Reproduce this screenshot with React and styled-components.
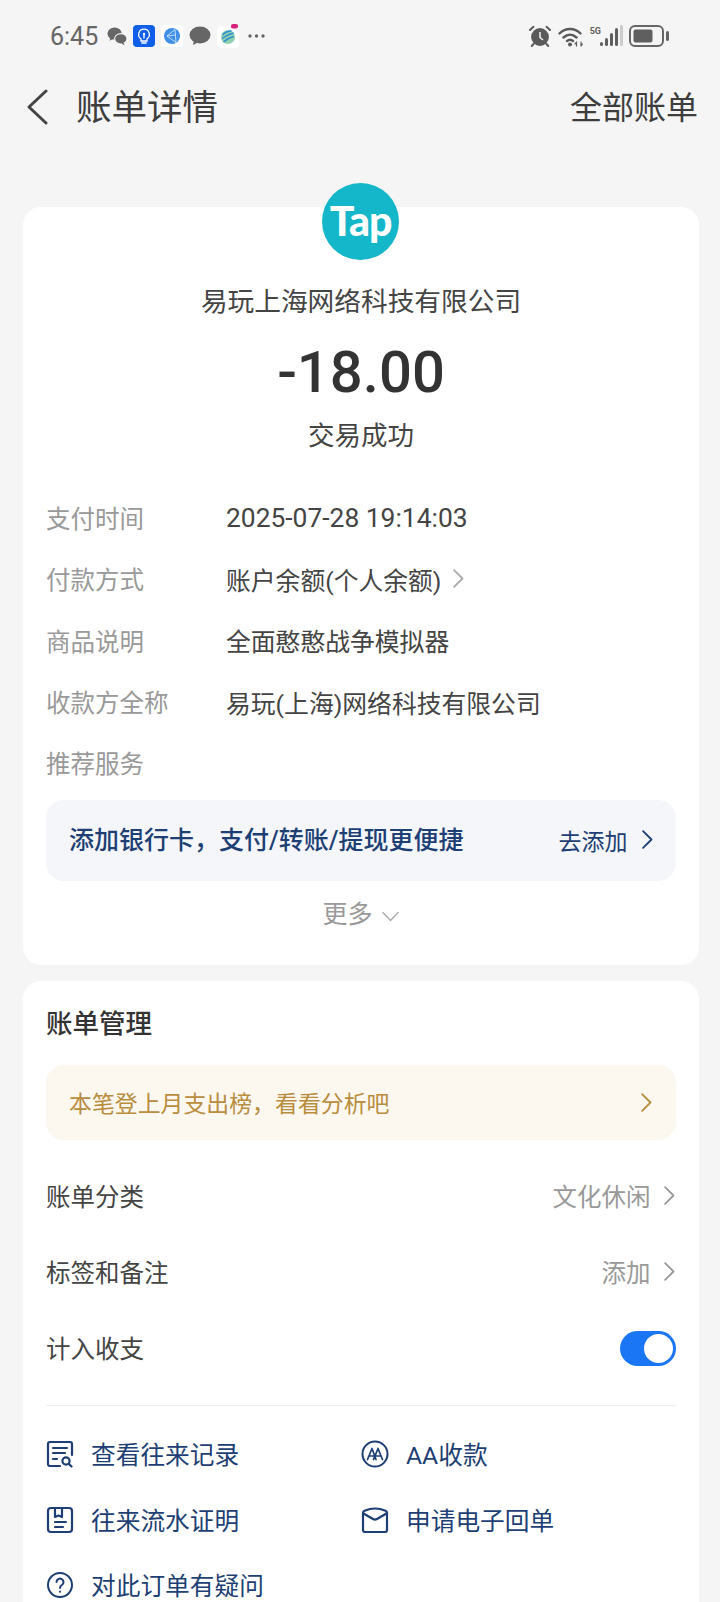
import React from "react";
import styled, { createGlobalStyle } from "styled-components";

const GlobalStyle = createGlobalStyle`
  html, body { margin: 0; padding: 0; background: #f5f5f5; }
  body { font-family: Roboto, "Noto Sans CJK SC", sans-serif; }
  * { box-sizing: border-box; }
`;

const Chevron = ({ color = "#999", size = 21, className }) => (
  <svg className={className} width={size * 0.6} height={size} viewBox="0 0 12 20" fill="none">
    <path d="M2 2l8 8-8 8" stroke={color} strokeWidth="1.7" strokeLinecap="round" strokeLinejoin="round" />
  </svg>
);

const RecordIcon = () => (
  <svg width="28" height="28" viewBox="0 0 28 28" fill="none" stroke="#1d3f73" strokeWidth="2.2" strokeLinecap="round" strokeLinejoin="round">
    <path d="M14 26H4a2 2 0 0 1-2-2V4a2 2 0 0 1 2-2h20a2 2 0 0 1 2 2v11" />
    <path d="M7 8h14M7 13h12M7 19h4" />
    <circle cx="20" cy="21" r="3.6" />
    <path d="M23 24l2.5 2.500" />
  </svg>
);

const ProofIcon = () => (
  <svg width="28" height="28" viewBox="0 0 28 28" fill="none" stroke="#1d3f73" strokeWidth="2.2" strokeLinecap="round" strokeLinejoin="round">
    <rect x="2" y="2" width="24" height="24" rx="3" />
    <path d="M9 2v9l3.500-1.500L16 11V2M9 16h11M9 21h8" />
  </svg>
);

const QuestionIcon = () => (
  <svg width="28" height="28" viewBox="0 0 28 28" fill="none" stroke="#1d3f73" strokeWidth="2" strokeLinecap="round" strokeLinejoin="round">
    <circle cx="14" cy="14" r="12" />
    <path d="M10.500 11a3.500 3.500 0 1 1 5.400 3c-1.200.8-1.900 1.500-1.900 3" />
    <path d="M14 20.500v.2" />
  </svg>
);

const SplitIcon = () => (
  <svg width="28" height="28" viewBox="0 0 28 28" fill="none" stroke="#1d3f73" strokeWidth="2" strokeLinecap="round" strokeLinejoin="round">
    <circle cx="14" cy="14" r="12.500" />
    <path d="M6.500 19.500L11 8.500l4 11M12.500 19.500L17 8.500l4.500 11M9 16h4M15 16h4" strokeWidth="1.700" />
  </svg>
);

const MailIcon = () => (
  <svg width="28" height="26" viewBox="0 0 28 26" fill="none" stroke="#1d3f73" strokeWidth="2.2" strokeLinecap="round" strokeLinejoin="round">
    <path d="M2 6c0-1 .6-1.800 1.500-2.200C7 2.300 10.500 1.500 14 1.500s7 .8 10.500 2.300c.9.4 1.500 1.200 1.500 2.200v17a2 2 0 0 1-2 2H4a2 2 0 0 1-2-2z" />
    <path d="M2.500 6.500L12 12a4 4 0 0 0 4 0l9.500-5.500" />
  </svg>
);

const ChatBubbles = () => (
  <svg width="20" height="20" viewBox="0 0 21 20" fill="#666">
    <ellipse cx="8" cy="7.500" rx="7.500" ry="6.500" />
    <path d="M3.500 11.500l-.8 3.500 4-2.200z" />
    <ellipse cx="14.500" cy="13" rx="6.500" ry="5.500" stroke="#f5f5f5" strokeWidth="1.200" />
    <path d="M17.500 17l1 2.800-3.500-1.800z" />
  </svg>
);

const BulbBadge = () => (
  <svg width="22" height="22" viewBox="0 0 22 22">
    <rect width="22" height="22" rx="4" fill="#0f5fe8" />
    <path d="M11 4.200a5.300 5.300 0 0 0-3 9.700v2.100h6v-2.100a5.300 5.300 0 0 0-3-9.700z" fill="none" stroke="#fff" strokeWidth="1.300" />
    <path d="M11 9v4M8.800 18h4.400" stroke="#fff" strokeWidth="1.300" strokeLinecap="round" />
    <circle cx="11" cy="9" r="1.200" fill="#fff" />
  </svg>
);

const NetworkBadge = () => (
  <svg width="22" height="22" viewBox="0 0 22 22">
    <rect width="22" height="22" rx="4" fill="#fff" />
    <circle cx="11" cy="11" r="8" fill="#3f8fe8" />
    <path d="M14 4.500L6 11l9 6.500zM6 11l8-1" fill="none" stroke="#cfe4fa" strokeWidth="0.900" />
  </svg>
);

const Bubble = () => (
  <svg width="22" height="20" viewBox="0 0 22 20" fill="#666">
    <ellipse cx="11" cy="9" rx="10.500" ry="8.500" />
    <path d="M5 14l-1 5 6-3z" />
  </svg>
);

const MobileBadge = () => (
  <svg width="22" height="24" viewBox="0 0 22 24" fill="none">
    <rect y="2" width="22" height="22" rx="4" fill="#fff" />
    <circle cx="11" cy="13" r="7" fill="#8fd0b0" />
    <path d="M5.500 11c3-3 6-4 9-4M5 14.500c4-3 7-4.500 11.500-5.500M6.500 18c3-3 6-4.500 10-5.500" stroke="#2f8fd0" strokeWidth="1.500" />
    <rect x="14" y="0" width="7" height="4.500" rx="2" fill="#d81e7a" />
  </svg>
);

const Dots = () => (
  <svg width="17" height="4" viewBox="0 0 17 4" fill="#666">
    <circle cx="2" cy="2" r="1.700" />
    <circle cx="8.500" cy="2" r="1.700" />
    <circle cx="15" cy="2" r="1.700" />
  </svg>
);

const AlarmIcon = () => (
  <svg width="24" height="22" viewBox="0 0 23 22" fill="none">
    <circle cx="11.500" cy="12" r="8.900" fill="#5a5a5a" />
    <path d="M11.500 7v5.500l3 2.500" stroke="#f5f5f5" strokeWidth="1.500" />
    <path d="M1.500 5L5 1.800M21.500 5L18 1.800M5 19l-1.700 2M18 19l1.700 2" stroke="#5a5a5a" strokeWidth="2" strokeLinecap="round" />
  </svg>
);

const WifiIcon = () => (
  <svg width="26" height="21" viewBox="0 0 26 21" fill="none" stroke="#5a5a5a" strokeWidth="2.400" strokeLinecap="round">
    <path d="M1.500 7.500c6-6 15-6 21 0M5.500 11.500c4-3.700 9-3.700 13 0M9 15c2-1.700 4-1.700 6 0" />
    <circle cx="12" cy="18.500" r="2" fill="#5a5a5a" stroke="none" />
    <path d="M18.500 16v4M18.500 16l-1.500 2M23 16v4M23 20l1.500-2" strokeWidth="1.200" />
  </svg>
);

const SignalIcon = () => (
  <svg width="23" height="22" viewBox="0 0 23 22">
    <rect x="0" y="17" width="3" height="4" rx="1.500" fill="#5f5f5f" />
    <rect x="5" y="13" width="3" height="8" rx="1.500" fill="#5f5f5f" />
    <rect x="10" y="8" width="3" height="13" rx="1.500" fill="#5f5f5f" />
    <rect x="15" y="3" width="3" height="18" rx="1.500" fill="#5f5f5f" />
    <rect x="20" y="0" width="3" height="21" rx="1.500" fill="#ccc" />
  </svg>
);

const BatteryIcon = () => (
  <svg width="41" height="22" viewBox="0 0 41 22" fill="none">
    <rect x="1" y="1" width="33" height="20" rx="5" stroke="#666" strokeWidth="2" />
    <rect x="4.500" y="4.500" width="19" height="13" rx="2" fill="#5f5f5f" />
    <rect x="37" y="6" width="3" height="10" rx="1.500" fill="#666" />
  </svg>
);

const BackIcon = () => (
  <svg width="22" height="36" viewBox="0 0 22 36" fill="none">
    <path d="M20 2L3 18l17 16" stroke="#444" strokeWidth="3" strokeLinecap="round" strokeLinejoin="round" />
  </svg>
);

const details = [
  { label: "支付时间", value: "2025-07-28 19:14:03", numeric: true },
  { label: "付款方式", value: "账户余额(个人余额)", link: true },
  { label: "商品说明", value: "全面憨憨战争模拟器" },
  { label: "收款方全称", value: "易玩(上海)网络科技有限公司" },
  { label: "推荐服务" },
];

const manageRows = [
  { label: "账单分类", value: "文化休闲" },
  { label: "标签和备注", value: "添加" },
];

const actions = [
  { icon: <RecordIcon />, text: "查看往来记录" },
  { icon: <SplitIcon />, text: "AA收款" },
  { icon: <ProofIcon />, text: "往来流水证明" },
  { icon: <MailIcon />, text: "申请电子回单" },
  { icon: <QuestionIcon />, text: "对此订单有疑问" },
];

const App = () => (
  <Page>
    <GlobalStyle />
    <StatusBar>
      <StatusLeft>
        <Clock>6:45</Clock>
        <ChatBubbles />
        <BulbBadge />
        <NetworkBadge />
        <Bubble />
        <MobileBadge />
        <DotsWrap><Dots /></DotsWrap>
      </StatusLeft>
      <StatusRight>
        <AlarmIcon />
        <WifiIcon />
        <SignalWrap>
          <FiveG>5G</FiveG>
          <SignalIcon />
        </SignalWrap>
        <BatteryIcon />
      </StatusRight>
    </StatusBar>

    <Nav>
      <NavLeft>
        <BackIcon />
        <NavTitle>账单详情</NavTitle>
      </NavLeft>
      <NavAction>全部账单</NavAction>
    </Nav>

    <Content>
      <SummaryCard>
        <Logo>Tap</Logo>
        <Merchant>易玩上海网络科技有限公司</Merchant>
        <Amount>-18.00</Amount>
        <Status>交易成功</Status>
        <DetailList>
          {details.map((item) => (
            <DetailRow key={item.label}>
              <DetailLabel>{item.label}</DetailLabel>
              <DetailValue $numeric={item.numeric}>
                {item.value}
                {item.link && <Chevron color="#aaa" />}
              </DetailValue>
            </DetailRow>
          ))}
        </DetailList>
        <PromoBanner>
          <PromoText>添加银行卡，支付/转账/提现更便捷</PromoText>
          <PromoAction>
            去添加
            <Chevron color="#1d3f73" />
          </PromoAction>
        </PromoBanner>
        <More>
          更多
          <MoreArrow width="19" height="11" viewBox="0 0 18 11" fill="none">
            <path d="M1.500 1.500L9 9.500l7.500-8" stroke="#aaa" strokeWidth="1.400" strokeLinecap="round" strokeLinejoin="round" />
          </MoreArrow>
        </More>
      </SummaryCard>

      <ManageCard>
        <CardTitle>账单管理</CardTitle>
        <TipBanner>
          <TipText>本笔登上月支出榜，看看分析吧</TipText>
          <Chevron color="#b98c3e" />
        </TipBanner>
        <ManageList>
          {manageRows.map((row) => (
            <ManageRow key={row.label}>
              {row.label}
              <ManageValue>
                {row.value}
                <Chevron color="#999" />
              </ManageValue>
            </ManageRow>
          ))}
          <ManageRow>
            计入收支
            <Toggle>
              <Knob />
            </Toggle>
          </ManageRow>
        </ManageList>
        <Divider />
        <ActionGrid>
          {actions.map((action) => (
            <ActionItem key={action.text}>
              <ActionIcon>{action.icon}</ActionIcon>
              {action.text}
            </ActionItem>
          ))}
        </ActionGrid>
      </ManageCard>
    </Content>
  </Page>
);

export default App;

const Page = styled.div`
  width: 720px;
  height: 1602px;
  overflow: hidden;
  background: #f5f5f5;
  color: #333;
`;

const StatusBar = styled.div`
  height: 72px;
  display: flex;
  align-items: center;
  justify-content: space-between;
  padding: 0 50px;
`;

const StatusLeft = styled.div`
  display: flex;
  align-items: center;
  gap: 6px;
`;

const Clock = styled.span`
  font-size: 25px;
  color: #666;
  margin-right: 3px;
`;

const DotsWrap = styled.span`
  display: flex;
  margin-left: 3px;
`;

const StatusRight = styled.div`
  display: flex;
  align-items: center;
  gap: 6px;
`;

const SignalWrap = styled.span`
  display: flex;
  align-items: flex-end;
`;

const FiveG = styled.span`
  font-size: 9px;
  font-weight: 700;
  color: #5f5f5f;
  align-self: flex-start;
  line-height: 12px;
  margin-right: -1px;
`;

const Nav = styled.div`
  height: 70px;
  display: flex;
  align-items: center;
  justify-content: space-between;
  padding: 0 22px 0 26px;
`;

const NavLeft = styled.div`
  display: flex;
  align-items: center;
  gap: 28px;
`;

const NavTitle = styled.div`
  font-size: 35.500px;
  color: #3d3d3d;
  padding-bottom: 5px;
`;

const NavAction = styled.div`
  font-size: 32px;
  color: #3d3d3d;
  padding-bottom: 4px;
`;

const Content = styled.div`
  padding: 65px 21px 0 23px;
  display: flex;
  flex-direction: column;
  gap: 16px;
`;

const Card = styled.div`
  position: relative;
  background: #fff;
  border-radius: 18px;
  padding-left: 23px;
  padding-right: 23px;
`;

const SummaryCard = styled(Card)`
  padding-top: 77px;
  padding-bottom: 35px;
`;

const ManageCard = styled(Card)`
  padding-top: 25px;
  padding-bottom: 20px;
`;

const Logo = styled.div`
  position: absolute;
  top: -24px;
  left: 299px;
  width: 77px;
  height: 77px;
  border-radius: 50%;
  background: #14b6c9;
  color: #fff;
  font-family: Lato, sans-serif;
  font-weight: 900;
  font-size: 41px;
  letter-spacing: -1px;
  padding-bottom: 2px;
  display: flex;
  align-items: center;
  justify-content: center;
`;

const Merchant = styled.div`
  font-size: 26.700px;
  line-height: 36px;
  text-align: center;
  color: #444;
`;

const Amount = styled.div`
  margin-top: 17px;
  font-size: 58px;
  line-height: 70px;
  font-weight: 500;
  text-align: center;
  color: #333;
`;

const Status = styled.div`
  margin-top: 11px;
  font-size: 26.500px;
  line-height: 36px;
  text-align: center;
  color: #444;
`;

const DetailList = styled.div`
  margin-top: 33px;
`;

const DetailRow = styled.div`
  height: 61.300px;
  display: flex;
  align-items: center;
  font-size: 24.500px;
`;

const DetailLabel = styled.div`
  width: 180px;
  color: #999;
`;

const DetailValue = styled.div`
  display: flex;
  align-items: center;
  gap: 10px;
  color: #444;
  font-size: ${({ $numeric }) => ($numeric ? "26.400px" : "24.800px")};
`;

const PromoBanner = styled.div`
  margin-top: 7px;
  height: 81px;
  border-radius: 18px;
  background: #f4f6fa;
  padding: 0 22px 0 23px;
  display: flex;
  align-items: center;
  justify-content: space-between;
`;

const PromoText = styled.div`
  font-size: 25px;
  font-weight: 500;
  color: #1d3f73;
  padding-bottom: 6px;
`;

const PromoAction = styled.div`
  display: flex;
  align-items: center;
  gap: 14px;
  font-size: 23px;
  color: #1d3f73;
  padding-bottom: 2px;
`;

const More = styled.div`
  margin-top: 13px;
  height: 36px;
  display: flex;
  align-items: center;
  justify-content: center;
  gap: 8px;
  font-size: 25px;
  color: #999;
`;

const MoreArrow = styled.svg`
  margin-top: 8px;
`;

const CardTitle = styled.div`
  font-size: 26.500px;
  line-height: 36px;
  font-weight: 500;
  color: #333;
`;

const TipBanner = styled.div`
  margin-top: 23px;
  height: 75px;
  border-radius: 18px;
  background: #fcf8f0;
  padding: 0 23px;
  display: flex;
  align-items: center;
  justify-content: space-between;
  color: #b98c3e;
`;

const TipText = styled.div`
  font-size: 22.900px;
  padding-bottom: 2px;
`;

const ManageList = styled.div`
  margin-top: 17px;
`;

const ManageRow = styled.div`
  height: 76px;
  display: flex;
  align-items: center;
  justify-content: space-between;
  font-size: 24.500px;
  color: #444;
`;

const ManageValue = styled.div`
  display: flex;
  align-items: center;
  gap: 13px;
  color: #999;
`;

const Toggle = styled.div`
  width: 56px;
  height: 35px;
  margin-top: 2px;
  border-radius: 18px;
  background: #1a76f5;
  padding: 3px;
  display: flex;
  justify-content: flex-end;
`;

const Knob = styled.div`
  width: 29px;
  height: 29px;
  border-radius: 50%;
  background: #fff;
`;

const Divider = styled.div`
  margin-top: 20px;
  height: 1px;
  background: #eee;
`;

const ActionGrid = styled.div`
  margin-top: 14px;
  display: grid;
  grid-template-columns: 315px 1fr;
  grid-auto-rows: 65.500px;
`;

const ActionItem = styled.div`
  display: flex;
  align-items: center;
  font-size: 24.700px;
  color: #1d3f73;
`;

const ActionIcon = styled.span`
  display: flex;
  width: 45px;
  flex-shrink: 0;
  padding-top: 2px;
`;
